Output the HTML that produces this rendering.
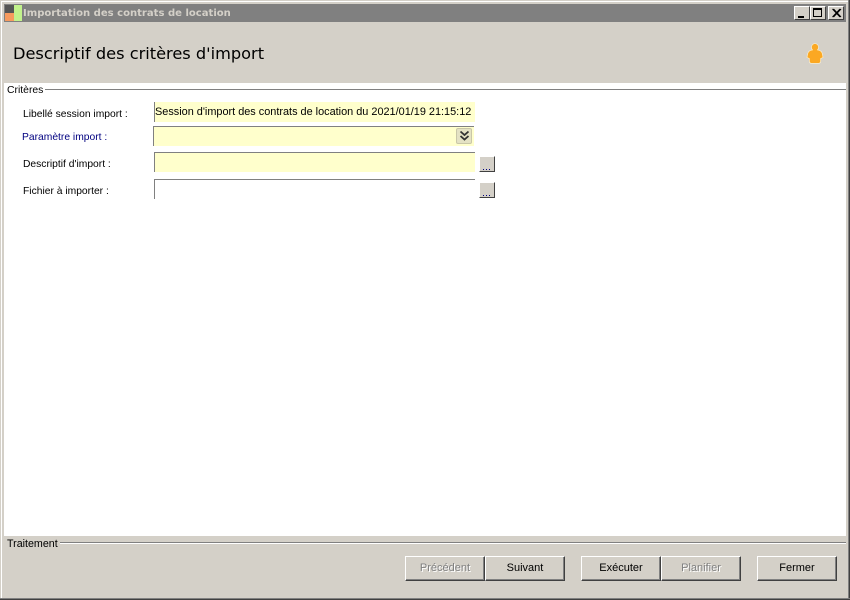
<!DOCTYPE html>
<html><head><meta charset="utf-8">
<style>
html,body{margin:0;padding:0;width:850px;height:600px;overflow:hidden;background:#d4d0c8}
body{position:relative;font-family:"Liberation Sans",sans-serif;font-size:11px;color:#000}
.a{position:absolute;white-space:nowrap}
.lbl{position:absolute;white-space:nowrap;line-height:13px;height:13px;font-size:10.3px}
.inp{position:absolute;box-sizing:border-box;border-top:1px solid #808080;border-left:1px solid #808080;background:#ffffcc;line-height:17px;white-space:nowrap;overflow:hidden}
.dots{position:absolute;width:16px;height:16px;box-sizing:border-box;background:#d4d0c8;border-top:1px solid #fff;border-left:1px solid #fff;border-right:1px solid #404040;border-bottom:1px solid #404040;}
.dots i{position:absolute;left:3px;top:12px;width:9px;height:1px;background:repeating-linear-gradient(90deg,#000080 0 1px,transparent 1px 3px)}
.btn{position:absolute;top:556px;height:25px;box-sizing:border-box;background:#d4d0c8;border-top:1px solid #fff;border-left:1px solid #fff;border-right:1px solid #404040;border-bottom:1px solid #404040;text-align:center;line-height:23px;font-size:11px;box-shadow:inset -1px -1px 0 #808080}
.dis{color:#808080;text-shadow:1px 1px 0 #fff}
.wb{position:absolute;top:6px;width:16px;height:14px;box-sizing:border-box;background:#d4d0c8;border-top:1px solid #fff;border-left:1px solid #fff;border-right:1px solid #404040;border-bottom:1px solid #404040}
</style></head><body>
<!-- window frame -->
<div class="a" style="left:0;top:0;width:850px;height:1px;background:#d4d0c8"></div>
<div class="a" style="left:1px;top:1px;width:847px;height:1px;background:#fff"></div>
<div class="a" style="left:1px;top:1px;width:1px;height:597px;background:#fff"></div>
<div class="a" style="left:848px;top:0;width:1px;height:599px;background:#808080"></div>
<div class="a" style="left:849px;top:0;width:1px;height:600px;background:#404040"></div>
<div class="a" style="left:0;top:598px;width:850px;height:1px;background:#808080"></div>
<div class="a" style="left:0;top:599px;width:850px;height:1px;background:#404040"></div>
<!-- title bar -->
<div class="a" style="left:4px;top:4px;width:842px;height:18px;background:#808080"></div>
<div class="a" style="left:5px;top:5px;width:9px;height:8px;background:#555"></div>
<div class="a" style="left:5px;top:13px;width:9px;height:8px;background:#f79a5e"></div>
<div class="a" style="left:14px;top:5px;width:8px;height:16px;background:#c2f28c"></div>
<div class="a" style="left:23px;top:5px;height:18px;line-height:18px;font-family:'DejaVu Sans',sans-serif;font-weight:bold;font-size:10.06px;color:#d4d0c8">Importation des contrats de location</div>
<div class="wb" style="left:794px"><div class="a" style="left:3px;top:9px;width:6px;height:2px;background:#000"></div></div>
<div class="wb" style="left:810px"><div class="a" style="left:2px;top:1px;width:9px;height:9px;box-sizing:border-box;border:1px solid #000;border-top-width:2px"></div></div>
<div class="wb" style="left:828px"><svg class="a" style="left:2px;top:1px" width="11" height="10"><path d="M1.500 1 L9 9 M2.500 1 L10 9 M9 1 L1.500 9 M10 1 L2.500 9" stroke="#000" stroke-width="1" fill="none"/></svg></div>
<!-- heading -->
<div class="a" style="left:13px;top:43px;line-height:21px;font-family:'DejaVu Sans',sans-serif;font-size:16.2px;color:#000">Descriptif des critères d'import</div>
<svg class="a" style="left:805px;top:42px" width="20" height="24"><path d="M9.500 1.500c2.300 0 4 1.500 4 3.800 0 1.200-.4 2-1 2.600 2.300.3 4.300 1.600 4.700 3.600l.8 4-2.300 1-.2 3.300c-.1 1-.8 1.500-1.800 1.500H6.300c-1 0-1.700-.5-1.800-1.500l-.2-3.300-2.300-1 .8-4c.4-2 2.400-3.300 4.700-3.600-.6-.6-1-1.400-1-2.600 0-2.300 1.700-3.800 4-3.800z" fill="#fba823" stroke="#fff3d0" stroke-width=".6"/></svg>
<!-- white panel -->
<div class="a" style="left:4px;top:83px;width:842px;height:453px;background:#fff"></div>
<div class="a" style="left:45px;top:89px;width:801px;height:1px;background:#808080"></div>
<div class="a" style="left:7px;top:84px;line-height:13px;font-size:10.4px;">Critères</div>
<!-- form -->
<div class="lbl" style="left:23px;top:108px">Libellé session import :</div>
<div class="lbl" style="left:22px;top:131px;color:#000080">Paramètre import :</div>
<div class="lbl" style="left:23px;top:158px">Descriptif d'import :</div>
<div class="lbl" style="left:23px;top:185px">Fichier à importer :</div>
<div class="inp" style="left:154px;top:102px;width:321px;height:20px;border-top:none;padding-left:0;line-height:20px;font-size:10.9px">Session d'import des contrats de location du 2021/01/19 21:15:12</div>
<div class="inp" style="left:153px;top:126px;width:321px;height:20px"></div>
<div class="a" style="left:456px;top:128px;width:16px;height:16px;box-sizing:border-box;background:#e4e2c4;border:1px solid #c9c7a8;border-radius:2px"><svg class="a" style="left:2px;top:1px" width="11" height="12"><path d="M1.500 1.500 L5.500 5 L9.500 1.500 M1.500 6 L5.500 9.500 L9.500 6" stroke="#333" stroke-width="1.800" fill="none"/></svg></div>
<div class="inp" style="left:154px;top:152px;width:321px;height:20px"></div>
<div class="inp" style="left:154px;top:179px;width:321px;height:20px;background:#fff"></div>
<div class="dots" style="left:479px;top:156px"><i></i></div>
<div class="dots" style="left:479px;top:182px"><i></i></div>
<!-- bottom -->
<div class="a" style="left:60px;top:542px;width:786px;height:1px;background:#808080"></div>
<div class="a" style="left:60px;top:543px;width:786px;height:1px;background:#fff"></div>
<div class="a" style="left:7px;top:538px;line-height:13px;font-size:10.7px">Traitement</div>
<div class="btn dis" style="left:405px;width:80px">Précédent</div>
<div class="btn" style="left:485px;width:80px">Suivant</div>
<div class="btn" style="left:581px;width:80px">Exécuter</div>
<div class="btn dis" style="left:661px;width:80px">Planifier</div>
<div class="btn" style="left:757px;width:80px">Fermer</div>
</body></html>
